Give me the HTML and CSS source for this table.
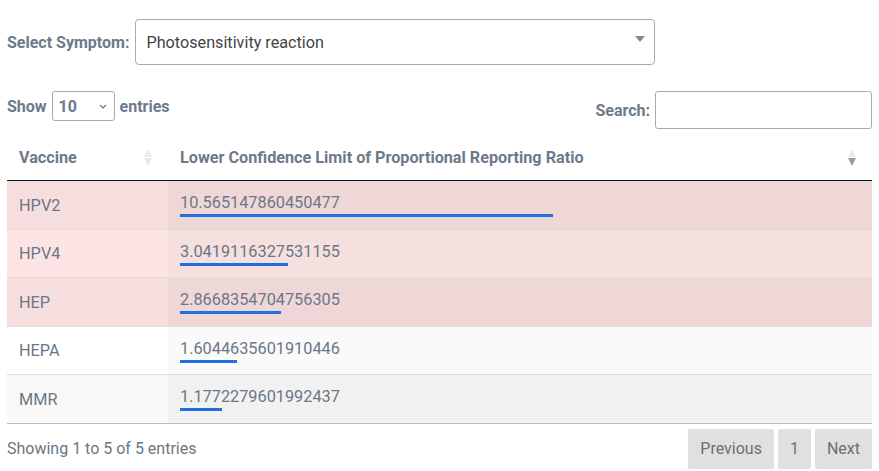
FILE: index.html
```html
<!DOCTYPE html>
<html>
<head>
<meta charset="utf-8">
<link rel="stylesheet" href="styles.css">
</head>
<body>
<div class="symptom-row">
  <label class="lbl">Select Symptom:</label>
  <div class="big-select">
    <span>Photosensitivity reaction</span>
    <svg class="caret" width="10" height="6" viewBox="0 0 10 6"><path d="M0 0H10L5 6Z" fill="#888"/></svg>
  </div>
</div>
<div class="controls">
  <div class="length">
    <span class="lbl">Show</span>
    <div class="small-select">
      <span>10</span>
      <svg width="8" height="5" viewBox="0 0 8 5"><path d="M1 1L4 4L7 1" fill="none" stroke="#6b7785" stroke-width="1.2"/></svg>
    </div>
    <span class="lbl">entries</span>
  </div>
  <div class="filter">
    <span class="lbl">Search:</span>
    <div class="search-box"></div>
  </div>
</div>
<table class="dt">
  <thead>
    <tr>
      <th class="c1"><div class="th-in"><span>Vaccine</span><span class="sort"><i class="up"></i><i class="dn"></i></span></div></th>
      <th class="c2"><div class="th-in"><span>Lower Confidence Limit of Proportional Reporting Ratio</span><span class="sort"><i class="up"></i><i class="dn on"></i></span></div></th>
    </tr>
  </thead>
  <tbody>
    <tr class="odd hl"><td class="c1">HPV2</td><td class="c2"><div class="val">10.565147860450477</div><div class="bar" style="width:373px"></div></td></tr>
    <tr class="even hl"><td class="c1">HPV4</td><td class="c2"><div class="val">3.0419116327531155</div><div class="bar" style="width:108px"></div></td></tr>
    <tr class="odd hl"><td class="c1">HEP</td><td class="c2"><div class="val">2.8668354704756305</div><div class="bar" style="width:101px"></div></td></tr>
    <tr class="even"><td class="c1">HEPA</td><td class="c2"><div class="val">1.6044635601910446</div><div class="bar" style="width:57px"></div></td></tr>
    <tr class="odd"><td class="c1">MMR</td><td class="c2"><div class="val">1.1772279601992437</div><div class="bar" style="width:42px"></div></td></tr>
  </tbody>
</table>
<div class="footer">
  <div class="info">Showing 1 to 5 of 5 entries</div>
  <div class="pager">
    <span class="btn">Previous</span>
    <span class="btn">1</span>
    <span class="btn">Next</span>
  </div>
</div>
</body>
</html>
```
FILE: styles.css
```css
html, body { background: #fff; }
body {
  margin: 0 7px;
  font-family: Roboto, "Liberation Sans", Arial, sans-serif;
  font-size: 16px;
  color: #6b7785;
}
.lbl {
  font-weight: bold;
  font-size: 16px;
  color: #6c7a8b;
}
.symptom-row {
  display: flex;
  align-items: center;
  gap: 6px;
  padding-top: 19px;
}
.big-select {
  box-sizing: border-box;
  width: 520px;
  height: 46px;
  border: 1px solid #aaa;
  border-radius: 4px;
  display: flex;
  align-items: center;
  justify-content: space-between;
  padding: 0 9px 6px 10px;
  color: #444;
  font-size: 16.2px;
}
.big-select span { padding-top: 6px; }
.controls {
  display: flex;
  justify-content: space-between;
  align-items: flex-start;
  margin-top: 26px;
}
.length {
  display: flex;
  align-items: center;
  gap: 5px;
  height: 30px;
}
.small-select {
  box-sizing: border-box;
  width: 63px;
  height: 30px;
  border: 1px solid #aaa;
  border-radius: 3px;
  display: flex;
  align-items: center;
  justify-content: space-between;
  padding: 0 7px 0 6px;
  font-weight: bold;
  font-size: 16px;
  color: #6c7a8b;
}
.filter {
  display: flex;
  align-items: center;
  gap: 5px;
  height: 38px;
}
.search-box {
  box-sizing: border-box;
  width: 217px;
  height: 38px;
  border: 1px solid #aaa;
  border-radius: 3px;
}
.dt {
  width: 865px;
  border-collapse: collapse;
  margin-top: 10px;
  table-layout: fixed;
}
.dt th {
  text-align: left;
  font-weight: bold;
  font-size: 16.2px;
  line-height: 19px;
  color: #6c7a8b;
  padding: 9px 12px 13px 12px;
  border-bottom: 1px solid #111;
}
.dt th.c1 { width: 137px; }
.th-in {
  display: flex;
  justify-content: space-between;
  align-items: center;
}
.sort {
  display: flex;
  flex-direction: column;
  gap: 1px;
  margin-right: 4px;
}
.sort i {
  display: block;
  width: 0;
  height: 0;
  border-left: 4px solid transparent;
  border-right: 4px solid transparent;
}
.sort i.up { border-bottom: 8px solid #e6e9ee; }
.sort i.dn { border-top: 8px solid #e6e9ee; }
.sort i.dn.on { border-top-color: #949fae; }
.dt td {
  padding: 12px 12px 11.5px 12px;
  border-top: 1px solid #ddd;
  vertical-align: middle;
  line-height: 19px;
  font-size: 16.3px;
}
.dt tbody tr:first-child td { border-top: none; }
.dt tbody tr:last-child td { border-bottom: 1px solid #bbb; }
.val { line-height: 19px; }
.bar {
  height: 3px;
  margin-top: 2px;
  background: #1f6fdc;
}
tr.odd td.c1 { background: #f9f9f9; }
tr.odd td.c2 { background: #f1f1f1; }
tr.even td.c1 { background: #fff; }
tr.even td.c2 { background: #fafafa; }
tr.odd.hl td.c1 { background: #f6dede; }
tr.odd.hl td.c2 { background: #efd7d7; }
tr.even.hl td.c1 { background: #fde4e4; }
tr.even.hl td.c2 { background: #f6dfdf; }
.footer {
  display: flex;
  justify-content: space-between;
  align-items: center;
  margin-top: 5px;
}
.pager {
  display: flex;
  gap: 4px;
}
.btn {
  background: #e0e0e0;
  color: #6f6f6f;
  height: 40px;
  line-height: 40px;
  padding: 0 12px;
  border-radius: 2px;
}
```
